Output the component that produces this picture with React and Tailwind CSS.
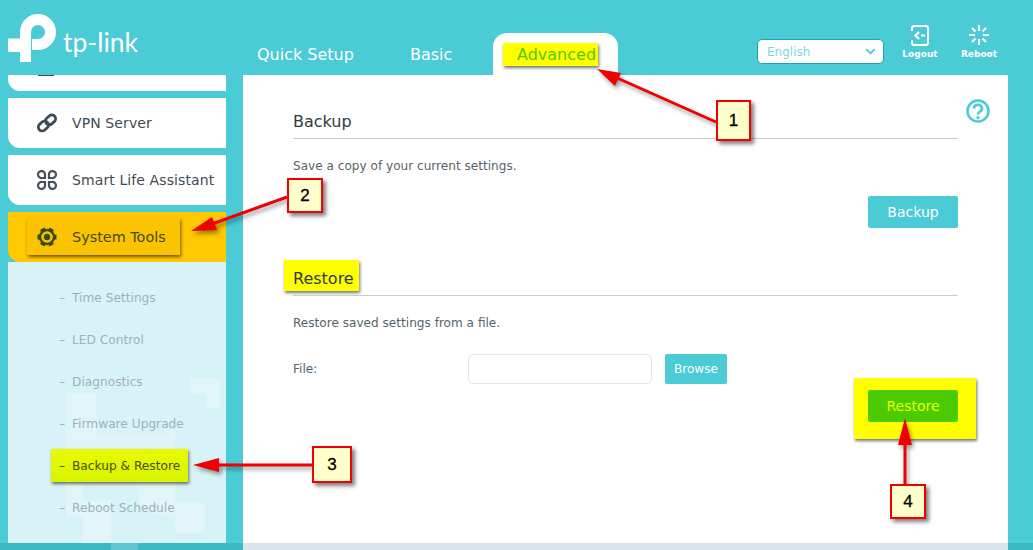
import { ChevronDown } from 'lucide-react';

const font = 'font-["DejaVu_Sans",Verdana,sans-serif]';

function LogoMark() {
    return (
        <svg width="50" height="50" viewBox="0 0 50 50" className="shrink-0">
            <path d="M0 24.5 H23 V48 H12 V38 H0 Z" fill="#fff" />
            <path
                d="M17.5 27 V18 A12.5 12.5 0 1 1 30 30.5 H24"
                fill="none"
                stroke="#fff"
                strokeWidth="11"
            />
        </svg>
    );
}

function LogoutIcon() {
    return (
        <svg width="20" height="21" viewBox="0 0 20 21" fill="none" stroke="#fff" strokeWidth="2">
            <path d="M2 6 V3 a2 2 0 0 1 2-2 H16 a2 2 0 0 1 2 2 V18 a2 2 0 0 1-2 2 H4 a2 2 0 0 1-2-2 V15" />
            <path d="M9 7 L5.5 10.5 L9 14" strokeWidth="2.4" />
            <path d="M11 10.5 H15" />
        </svg>
    );
}

function RebootIcon() {
    return (
        <svg width="20" height="20" viewBox="0 0 20 20" stroke="#fff" strokeWidth="2.2">
            <path d="M10 0 V6 M10 14 V20 M0 10 H6 M14 10 H20 M3 3 L6.5 6.5 M17 3 L13.5 6.5 M3 17 L6.5 13.5 M17 17 L13.5 13.5" />
        </svg>
    );
}

function ChainIcon() {
    return (
        <svg width="20" height="20" viewBox="0 0 20 20" fill="none" stroke="#3f4b52" strokeWidth="2.8" strokeLinecap="round">
            <rect x="0.8" y="9.5" width="11" height="7.6" rx="3.8" transform="rotate(-42 6 13)" />
            <rect x="8.2" y="2.8" width="11" height="7.6" rx="3.8" transform="rotate(-42 14 7)" />
        </svg>
    );
}

function CloverIcon() {
    return (
        <svg width="20" height="20" viewBox="0 0 20 20" fill="none" stroke="#46525a" strokeWidth="2.2">
            <path d="M8 8 H5 a3.5 3.5 0 1 1 3-3 Z" />
            <path d="M12 8 H15 a3.5 3.5 0 1 0-3-3 Z" />
            <path d="M8 12 H5 a3.5 3.5 0 1 0 3 3 Z" />
            <path d="M12 12 H15 a3.5 3.5 0 1 1-3 3 Z" />
        </svg>
    );
}

function GearIcon() {
    return (
        <svg width="20" height="20" viewBox="0 0 20 20">
            <g fill="#3c4a12">
                <rect x="7.5" y="0.5" width="5" height="19" transform="rotate(30 10 10)" />
                <rect x="7.5" y="0.5" width="5" height="19" transform="rotate(-30 10 10)" />
                <rect x="7.5" y="0.5" width="5" height="19" transform="rotate(90 10 10)" />
            </g>
            <circle cx="10" cy="10" r="8.2" fill="#3c4a12" />
            <circle cx="10" cy="10" r="5.8" fill="#fcc400" />
            <circle cx="10" cy="10" r="3.2" fill="#3c4a12" />
        </svg>
    );
}

function Watermark() {
    return (
        <svg width="218" height="281" viewBox="0 262 218 281" className="absolute top-0 left-0">
            <g fill="#e2f6f9">
                <path d="M182 378 H212 V408 H199 V393 H182 Z" />
                <path d="M58 393 H88 V407 H58 Z" />
                <path d="M130 487 H167 V503 H197 V533 H167 V516 Q130 516 130 495 Z" />
                <path d="M58 483 H75 V500 H103 V543 H75 V516 H58 Z" />
            </g>
            <g fill="#dff5f8">
                <path d="M58 407 H88 V483 H58 Z" />
                <path d="M88 433 H167 V487 H88 Z" />
            </g>
        </svg>
    );
}

function NavCard({ icon, label, className }) {
    return (
        <div className={`flex h-[50px] w-[218px] items-center rounded-bl-[12px] bg-white text-[#3f4b52] ${className}`}>
            <span className="ml-[29px] flex w-[35px] shrink-0">{icon}</span>
            <span className="text-[14px] tracking-[0.1px]">{label}</span>
        </div>
    );
}

function SubItem({ label, active }) {
    return (
        <div className={`relative flex h-[42px] items-center pl-[51px] text-[12.2px] ${active ? 'text-[#47520a]' : 'text-[#9fb0b8]'}`}>
            {active && (
                <div className="absolute top-[4px] left-[43px] h-[33px] w-[137px] bg-gradient-to-b from-[#e8fa00] to-[#d9f400] shadow-[1px_2px_3px_rgba(0,0,0,0.55)]" />
            )}
            <span className="relative w-[13px]">–</span>
            <span className="relative">{label}</span>
        </div>
    );
}

function Callout({ n, className }) {
    return (
        <div className={`absolute flex items-center justify-center border-2 border-[#f00000] bg-[#ffffcc] text-[17px] text-black shadow-[3px_3px_4px_rgba(0,0,0,0.5)] [-webkit-text-stroke:0.3px_black] font-["Liberation_Sans",sans-serif] ${className}`}>
            {n}
        </div>
    );
}

function Arrows() {
    const lines = [
        { d: 'M716 122 L615 77', head: '597,69 621,73 615,86' },
        { d: 'M287 197 L212 224', head: '191,231 212,217 217,230' },
        { d: 'M312 465 L215 465', head: '193,465 219,458 219,472' },
        { d: 'M905 484 L905 440', head: '905,418 912,445 898,445' },
    ];
    return (
        <svg
            width="1033"
            height="550"
            viewBox="0 0 1033 550"
            className="pointer-events-none absolute top-0 left-0 drop-shadow-[2px_3px_2px_rgba(0,0,0,0.4)]"
        >
            {lines.map((l) => (
                <g key={l.d}>
                    <path d={l.d} stroke="#f00000" strokeWidth="3" fill="none" />
                    <polygon points={l.head} fill="#f00000" />
                </g>
            ))}
        </svg>
    );
}

export default function App() {
    return (
        <div className={`relative h-[550px] w-[1033px] overflow-hidden bg-[#4acbd6] ${font}`}>
            {/* top bar */}
            <div className="flex h-[75px]">
                <div className="flex w-[257px] shrink-0 items-start pt-[14px] pl-[8px]">
                    <LogoMark />
                    <span className="ml-[5px] pt-[10px] font-['Lato',sans-serif] text-[26.5px] leading-[36px] font-normal text-white">tp-link</span>
                </div>
                <div className="flex items-end text-[16px] text-white">
                    <div className="flex h-[42px] w-[153px] items-center pt-[1px]">Quick Setup</div>
                    <div className="flex h-[42px] w-[83px] items-center pt-[1px]">Basic</div>
                    <div className="relative flex h-[42px] w-[125px] items-center rounded-t-[14px] bg-white pt-[1px] pl-[24px] text-[#57c800]">
                        <div className="absolute top-[10px] left-[10px] h-[23px] w-[95px] bg-[#ffff00] shadow-[1px_2px_3px_rgba(0,0,0,0.55)]" />
                        <span className="relative">Advanced</span>
                    </div>
                </div>
                <div className="mt-[39px] ml-[139px] flex h-[25px] w-[127px] items-center justify-between rounded-[5px] border border-[#17a8b3] bg-white pr-[5px] pl-[9px] text-[12px] text-[#7fd5de]">
                    English
                    <ChevronDown size={15} strokeWidth={3} color="#4acbd6" />
                </div>
                <div className="ml-[16px] flex w-[40px] flex-col items-center pt-[25px] text-[9px] font-bold text-white">
                    <LogoutIcon />
                    <span className="mt-[2px]">Logout</span>
                </div>
                <div className="ml-[19px] flex w-[40px] flex-col items-center pt-[25px] text-[9px] font-bold text-white">
                    <RebootIcon />
                    <span className="mt-[3px]">Reboot</span>
                </div>
            </div>

            <div className="flex h-[468px] pl-[8px]">
                {/* left menu */}
                <aside className="flex w-[218px] shrink-0 flex-col">
                    <div className="relative h-[16px] rounded-bl-[12px] bg-white">
                        <div className="absolute top-0 left-[30px] h-[1px] w-[16px] bg-[#3f4b52]" />
                    </div>
                    <NavCard className="mt-[7px]" icon={<ChainIcon />} label="VPN Server" />
                    <NavCard className="mt-[7px]" icon={<CloverIcon />} label="Smart Life Assistant" />
                    <div className="relative mt-[7px] flex h-[50px] items-center rounded-bl-[12px] bg-[#ffc800] text-[#3c4a12]">
                        <div className="absolute top-[6px] left-[19px] h-[37px] w-[153px] bg-[#fcc400] shadow-[1px_2px_3px_rgba(0,0,0,0.55)]" />
                        <span className="relative ml-[29px] flex w-[35px]">
                            <GearIcon />
                        </span>
                        <span className="relative pt-[1px] text-[14.4px]">System Tools</span>
                    </div>
                    <div className="relative flex-1 overflow-hidden bg-[#d8f3f7] pt-[15px]">
                        <Watermark />
                        <SubItem label="Time Settings" />
                        <SubItem label="LED Control" />
                        <SubItem label="Diagnostics" />
                        <SubItem label="Firmware Upgrade" />
                        <SubItem label="Backup & Restore" active />
                        <SubItem label="Reboot Schedule" />
                    </div>
                </aside>

                {/* main panel */}
                <main className="relative ml-[17px] w-[765px] bg-white pt-[37px] pr-[50px] pl-[50px] text-[12.1px] text-[#57636a]">
                    <svg width="24" height="24" viewBox="0 0 24 24" fill="none" className="absolute top-[24px] right-[18px]">
                        <circle cx="12" cy="12" r="10.5" stroke="#4acbd6" strokeWidth="2.6" />
                        <path d="M8 9.5 a4 3.6 0 1 1 6 3 c-1.5 1-2 1.5-2 3" stroke="#4acbd6" strokeWidth="2.6" />
                        <circle cx="12" cy="18.6" r="1.6" fill="#4acbd6" />
                    </svg>
                    <div className="h-[27px] border-b border-[#cccccc] text-[16px] leading-[20px] text-[#303a40]">Backup</div>
                    <p className="mt-[19px] leading-[16px]">Save a copy of your current settings.</p>
                    <div className="mt-[22px] flex justify-end">
                        <div className="flex h-[32px] w-[90px] items-center justify-center rounded-[2px] bg-[#4acbd6] text-[14px] text-white">Backup</div>
                    </div>

                    <div className="relative mt-[36px]">
                        <div className="absolute -top-[4px] -left-[9px] h-[31px] w-[75px] bg-[#ffff00] shadow-[1px_2px_3px_rgba(0,0,0,0.55)]" />
                        <div className="relative h-[32px] border-b border-[#cccccc] text-[16px] leading-[30px] text-[#303a40]">Restore</div>
                    </div>
                    <p className="mt-[19px] leading-[16px]">Restore saved settings from a file.</p>
                    <div className="mt-[23px] flex items-center">
                        <span className="w-[175px]">File:</span>
                        <div className="h-[30px] w-[184px] rounded-[5px] border border-[#e4e4e4] bg-white" />
                        <div className="ml-[13px] flex h-[30px] w-[62px] items-center justify-center rounded-[2px] bg-[#4acbd6] font-medium text-white">Browse</div>
                    </div>
                    <div className="relative mt-[6px] flex justify-end">
                        <div className="absolute -top-[12px] -right-[18px] h-[61px] w-[122px] bg-[#ffff00] shadow-[1px_2px_3px_rgba(0,0,0,0.55)]" />
                        <div className="relative flex h-[32px] w-[90px] items-center justify-center rounded-[2px] bg-[#4ccc00] text-[14px] text-[#eaff00]">Restore</div>
                    </div>
                </main>
            </div>

            {/* bottom strip */}
            <div className="flex h-[7px]">
                <div className="relative w-[243px] bg-[#3db9c5]">
                    <div className="absolute left-[111px] h-full w-[27px] bg-[#62c4cf]" />
                </div>
                <div className="w-[765px] bg-[#d9e5ea]" />
                <div className="flex-1 bg-[#3db9c5]" />
            </div>

            <Arrows />
            <Callout n={1} className="top-[100px] left-[716px] h-[41px] w-[35px]" />
            <Callout n={2} className="top-[178px] left-[287px] h-[35px] w-[36px]" />
            <Callout n={3} className="top-[446px] left-[312px] h-[37px] w-[40px]" />
            <Callout n={4} className="top-[484px] left-[890px] h-[35px] w-[36px]" />
        </div>
    );
}
